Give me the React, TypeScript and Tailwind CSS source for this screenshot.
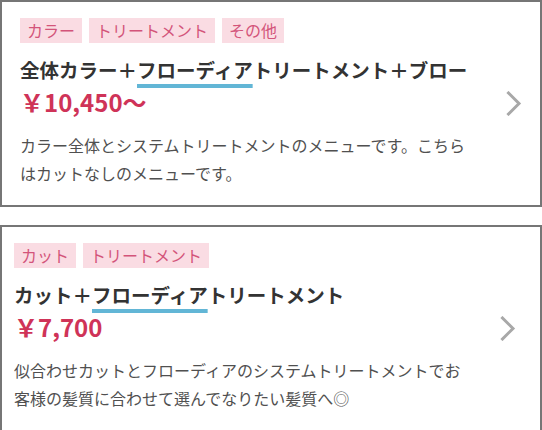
import React from 'react';

type Menu = {
  tags: string[];
  before: string;
  marked: string;
  after: string;
  price: string;
  desc: string;
};

const menus: Menu[] = [
  {
    tags: ['カラー', 'トリートメント', 'その他'],
    before: '全体カラー＋',
    marked: 'フローディア',
    after: 'トリートメント＋ブロー',
    price: '￥10,450〜',
    desc: 'カラー全体とシステムトリートメントのメニューです。こちらはカットなしのメニューです。',
  },
  {
    tags: ['カット', 'トリートメント'],
    before: 'カット＋',
    marked: 'フローディア',
    after: 'トリートメント',
    price: '￥7,700',
    desc: '似合わせカットとフローディアのシステムトリートメントでお客様の髪質に合わせて選んでなりたい髪質へ◎',
  },
];

const Chevron = () => (
  <svg width="16" height="25" viewBox="0 0 16 25" fill="none">
    <polyline points="2.5,2 13,12.5 2.5,23" stroke="#a8a8a8" strokeWidth="3" strokeLinecap="square" />
  </svg>
);

const MenuCard: React.FC<{ menu: Menu; first?: boolean }> = ({ menu, first }) => {
  return (
    <div className="flex items-center border-2 border-[#767676] bg-white">
      <div className={`flex-1 pt-4 pb-[18px] ${first ? 'pl-[18px]' : 'pl-3'}`}>
        <div className="flex gap-[7px]">
          {menu.tags.map((tag) => (
            <span key={tag} className="bg-[#fadce3] px-[7px] text-[16px] leading-[25px] text-[#d3547a]">
              {tag}
            </span>
          ))}
        </div>
        <h2 className="mt-3 text-[19.5px] font-bold leading-[30px] text-[#333333]">
          {menu.before}
          <span className="underline decoration-[#62b6d6] decoration-4 underline-offset-[6px]">{menu.marked}</span>
          {menu.after}
        </h2>
        <p className="mt-[1px] text-[24px] font-semibold leading-[32px] text-[#cf3358]">{menu.price}</p>
        <p className="mt-[13px] max-w-[456px] text-[16px] leading-[28px] text-[#505050]">{menu.desc}</p>
      </div>
      <div className={first ? 'pr-[18px]' : 'pr-6'}>
        <Chevron />
      </div>
    </div>
  );
};

export default function App() {
  return (
    <div
      className="flex h-[430px] w-[542px] flex-col gap-[18px] bg-white"
      style={{ fontFamily: '"Noto Sans CJK JP", "Noto Sans", sans-serif' }}
    >
      {menus.map((m, i) => (
        <MenuCard key={i} menu={m} first={i === 0} />
      ))}
    </div>
  );
}
